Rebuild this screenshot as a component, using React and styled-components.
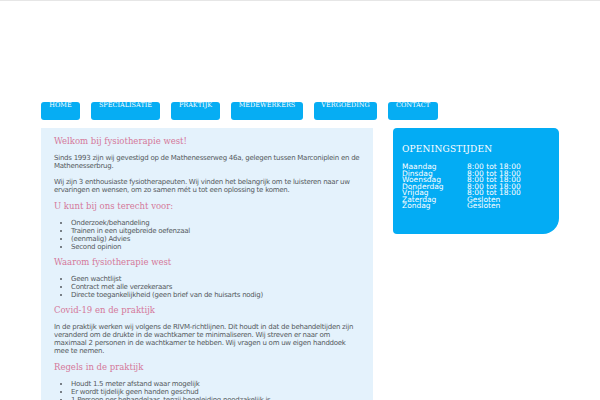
import React from 'react';
import styled, { createGlobalStyle } from 'styled-components';

const GlobalStyle = createGlobalStyle`
  html, body {
    margin: 0;
    padding: 0;
    background: #ffffff;
  }
  body {
    border-top: 1px solid #e6e6e6;
    font-family: 'DejaVu Sans', Verdana, sans-serif;
  }
`;

const Page = styled.div`
  width: 518px;
  padding: 101px 0 0 41px;
`;

const Nav = styled.nav`
  display: flex;
  gap: 11px;
  height: 18px;
`;

const NavButton = styled.a`
  display: block;
  width: ${({ w }) => w}px;
  height: 18px;
  border-radius: 3px;
  background: #06adf3;
  color: #ffffff;
  font-family: 'DejaVu Serif', serif;
  font-size: 6.5px;
  line-height: 7px;
  text-align: center;
  text-decoration: none;
`;

const Main = styled.div`
  display: flex;
  align-items: flex-start;
  gap: 20px;
  margin-top: 8px;
`;

const Content = styled.section`
  width: 332px;
  min-height: 300px;
  background: #e4f2fc;
  padding: 9px 13px 0 13px;
  box-sizing: border-box;
  color: #555a60;
  font-size: 7px;
  letter-spacing: -0.25px;
  line-height: 8px;
`;

const Heading = styled.h2`
  margin: 0 0 9px;
  font-family: 'DejaVu Serif', serif;
  font-weight: normal;
  font-size: 8.5px;
  line-height: 8px;
  letter-spacing: 0;
  color: #d4789a;
`;

const Text = styled.p`
  margin: 0 0 8px;
`;

const List = styled.ul`
  margin: 0 0 7px;
  padding-left: 17px;
  list-style: disc;
`;

const Sidebar = styled.aside`
  width: 166px;
  height: 106px;
  background: #03acf4;
  border-radius: 4px 5px 16px 4px;
  padding: 16px 9px 0;
  box-sizing: border-box;
  color: #ffffff;
`;

const SideTitle = styled.h3`
  margin: 0 0 10px;
  font-family: 'DejaVu Serif', serif;
  font-weight: normal;
  font-size: 9px;
  line-height: 10px;
  letter-spacing: 0.2px;
`;

const Hours = styled.div`
  display: grid;
  grid-template-columns: 65px 1fr;
  font-size: 7.5px;
  line-height: 6.5px;
`;

const navItems = [
  ['HOME', 39],
  ['SPECIALISATIE', 69],
  ['PRAKTIJK', 49],
  ['MEDEWERKERS', 72],
  ['VERGOEDING', 63],
  ['CONTACT', 50],
];

const hours = [
  ['Maandag', '8:00 tot 18:00'],
  ['Dinsdag', '8:00 tot 18:00'],
  ['Woensdag', '8:00 tot 18:00'],
  ['Donderdag', '8:00 tot 18:00'],
  ['Vrijdag', '8:00 tot 18:00'],
  ['Zaterdag', 'Gesloten'],
  ['Zondag', 'Gesloten'],
];

const App = () => (
  <>
    <GlobalStyle />
    <Page>
      <Nav>
        {navItems.map(([label, w]) => (
          <NavButton key={label} w={w} href="#">
            {label}
          </NavButton>
        ))}
      </Nav>
      <Main>
        <Content>
          <Heading>Welkom bij fysiotherapie west!</Heading>
          <Text>
            Sinds 1993 zijn wij gevestigd op de Mathenesserweg 46a, gelegen tussen Marconiplein en de
            Mathenesserbrug.
          </Text>
          <Text>
            Wij zijn 3 enthousiaste fysiotherapeuten. Wij vinden het belangrijk om te luisteren naar uw
            ervaringen en wensen, om zo samen mét u tot een oplossing te komen.
          </Text>
          <Heading>U kunt bij ons terecht voor:</Heading>
          <List>
            <li>Onderzoek/behandeling</li>
            <li>Trainen in een uitgebreide oefenzaal</li>
            <li>(eenmalig) Advies</li>
            <li>Second opinion</li>
          </List>
          <Heading>Waarom fysiotherapie west</Heading>
          <List>
            <li>Geen wachtlijst</li>
            <li>Contract met alle verzekeraars</li>
            <li>Directe toegankelijkheid (geen brief van de huisarts nodig)</li>
          </List>
          <Heading>Covid-19 en de praktijk</Heading>
          <Text>
            In de praktijk werken wij volgens de RIVM-richtlijnen. Dit houdt in dat de behandeltijden zijn
            veranderd om de drukte in de wachtkamer te minimaliseren. Wij streven er naar om
            maximaal 2 personen in de wachtkamer te hebben. Wij vragen u om uw eigen handdoek mee
            te nemen.
          </Text>
          <Heading>Regels in de praktijk</Heading>
          <List>
            <li>Houdt 1.5 meter afstand waar mogelijk</li>
            <li>Er wordt tijdelijk geen handen geschud</li>
            <li>1 Persoon per behandelaar, tenzij begeleiding noodzakelijk is</li>
          </List>
        </Content>
        <Sidebar>
          <SideTitle>OPENINGSTIJDEN</SideTitle>
          <Hours>
            {hours.map(([day, time]) => (
              <React.Fragment key={day}>
                <span>{day}</span>
                <span>{time}</span>
              </React.Fragment>
            ))}
          </Hours>
        </Sidebar>
      </Main>
    </Page>
  </>
);

export default App;
